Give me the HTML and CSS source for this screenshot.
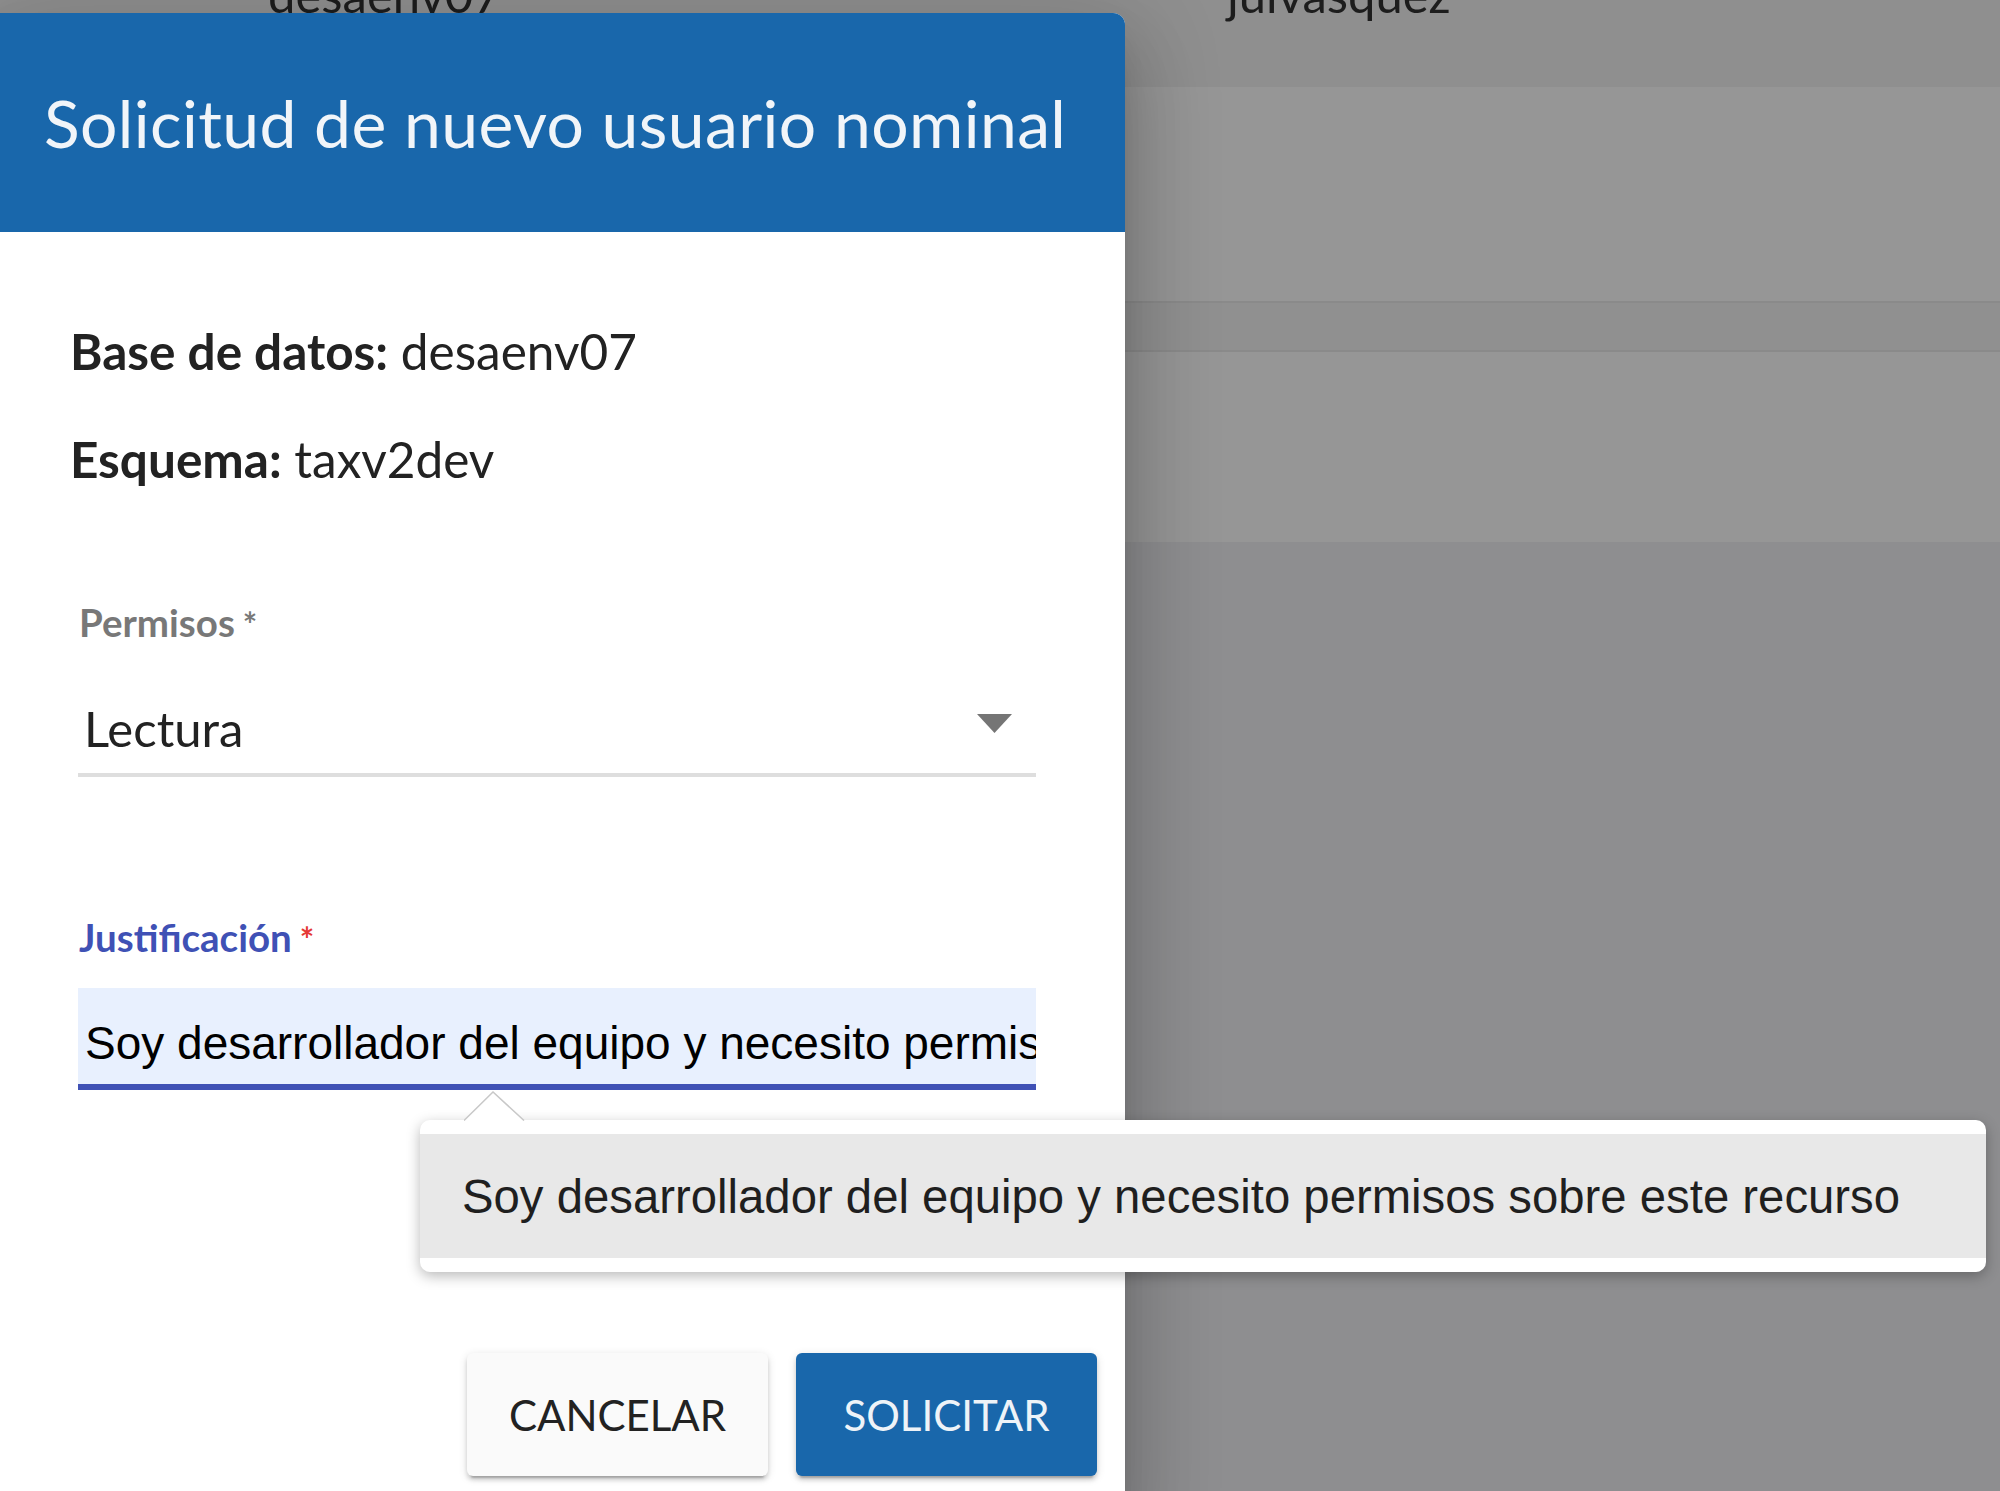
FILE: index.html
```html
<!DOCTYPE html>
<html lang="es">
<head>
<meta charset="utf-8">
<title>Solicitud de nuevo usuario nominal</title>
<link rel="stylesheet" href="styles.css">
</head>
<body>
<div class="page">
  <div class="bg">
    <div class="bg-row bg-row--head">
      <div class="bg-cells"><span class="cell cell--db">desaenv07</span><span class="cell cell--user">julvasquez</span></div>
    </div>
    <div class="bg-row bg-row--a"></div>
    <div class="bg-row bg-row--b"></div>
    <div class="bg-row bg-row--c"></div>
  </div>

  <div class="dialog">
    <div class="dialog-header"><h1 class="dialog-title">Solicitud de nuevo usuario nominal</h1></div>
    <div class="dialog-body">
      <p class="info"><b>Base de datos:</b> desaenv07</p>
      <p class="info info--second"><b>Esquema:</b> taxv2dev</p>

      <div class="field field--select">
        <label class="field-label">Permisos<span class="req">*</span></label>
        <div class="select">
          <span class="select-value">Lectura</span>
          <svg class="caret" width="35" height="19" viewBox="0 0 35 19"><path d="M0 0 H35 L17.5 19 Z" fill="#757575"/></svg>
        </div>
      </div>

      <div class="field field--input">
        <label class="field-label field-label--focused">Justificación<span class="req req--error">*</span></label>
        <div class="input">Soy desarrollador del equipo y necesito permisos sobre este recurso</div>
      </div>

      <div class="actions">
        <button class="btn btn--cancel">CANCELAR</button>
        <button class="btn btn--primary">SOLICITAR</button>
      </div>
    </div>
  </div>

  <div class="autofill">
    <svg class="autofill-arrow" width="62" height="30" viewBox="0 0 62 30"><path d="M0 29.5 L29 1 L60 29.5" fill="#fff" stroke="#c8c8c8" stroke-width="1.5"/></svg>
    <div class="autofill-item">Soy desarrollador del equipo y necesito permisos sobre este recurso</div>
  </div>
</div>
</body>
</html>
```

FILE: styles.css
```css
* { box-sizing: border-box; }

body {
  margin: 0;
  background: #8e8e90;
}

.page {
  position: relative;
  width: 2000px;
  height: 1491px;
  overflow: hidden;
  font-family: Lato, "Noto Sans", sans-serif;
  background: #8e8e90;
}

/* background page (behind the modal overlay) */
.bg-row { width: 100%; }
.bg-row--head {
  height: 87px;
  background: #8f8f8f;
  overflow: hidden;
}
.bg-cells {
  display: flex;
  padding-left: 268px;
  margin-top: -36px;
  font-size: 49px;
  line-height: 60px;
  color: #1d1d1d;
  white-space: nowrap;
}
.cell--db { width: 959px; }
.bg-row--a {
  height: 216px;
  background: #969696;
  border-bottom: 2px solid #8a8a8a;
}
.bg-row--b {
  height: 49px;
  background: #909090;
  border-bottom: 2px solid #8a8a8a;
}
.bg-row--c {
  height: 190px;
  background: #969696;
}

/* dialog */
.dialog {
  position: absolute;
  left: 0;
  top: 13px;
  width: 1125px;
  bottom: -30px;
  background: #fff;
  border-radius: 0 12px 0 0;
  box-shadow: 0 22px 30px -14px rgba(0,0,0,.2), 0 48px 76px 6px rgba(0,0,0,.14), 0 18px 92px 16px rgba(0,0,0,.12);
}
.dialog-header {
  height: 219px;
  background: #1967ab;
  border-radius: 0 12px 0 0;
  padding-left: 44px;
}
.dialog-title {
  margin: 0;
  font-weight: 400;
  font-size: 66px;
  letter-spacing: 0.4px;
  line-height: 219px;
  color: #f1f5f9;
  white-space: nowrap;
}
.dialog-body {
  padding: 89px 28px 0 70px;
}
.info {
  margin: 0;
  font-size: 49.5px;
  line-height: 60px;
  color: #222;
  white-space: nowrap;
}
.info b { font-weight: 700; }
.info--second { margin-top: 48px; }

.field {
  margin-left: 8px;
  width: 958px;
}
.field--select { margin-top: 113px; }
.field--input { margin-top: 140px; }
.field-label {
  display: block;
  height: 40px;
  padding-left: 1px;
  font-size: 38.5px;
  line-height: 40px;
  font-weight: 700;
  color: #787878;
  white-space: nowrap;
}
.field-label--focused { color: #3f51b5; }
.req { margin-left: 8px; font-size: 34px; }
.req--error { color: #e53935; }

.select {
  margin-top: 56px;
  height: 79px;
  padding: 0 24px 0 6px;
  border-bottom: 4px solid #dedede;
  display: flex;
  justify-content: space-between;
  align-items: flex-start;
  font-size: 49px;
  line-height: 60px;
  color: #222;
}
.caret { margin-top: 16px; }

.input {
  margin-top: 31px;
  height: 102px;
  padding: 14px 5px 0 7px;
  border-bottom: 6px solid #3f51b5;
  background: #e8f0fe;
  font-family: "Liberation Sans", Arial, sans-serif;
  font-size: 46px;
  line-height: 82px;
  color: #000;
  white-space: nowrap;
  overflow: hidden;
}

.actions {
  margin-top: 263px;
  display: flex;
  justify-content: flex-end;
  gap: 28px;
}
.btn {
  width: 301px;
  height: 123px;
  border: 0;
  border-radius: 6px;
  font-family: Lato, "Noto Sans", sans-serif;
  font-size: 42px;
  box-shadow: 0 6px 2px -4px rgba(0,0,0,.2), 0 4px 4px rgba(0,0,0,.14), 0 2px 10px rgba(0,0,0,.12);
}
.btn--cancel { background: #fafafa; color: #222; }
.btn--primary { background: #1967ab; color: #eef3f8; }

/* browser autofill suggestion */
.autofill {
  position: absolute;
  left: 420px;
  top: 1120px;
  width: 1566px;
  height: 152px;
  padding: 14px 0;
  background: #fff;
  border-radius: 10px;
  box-shadow: 0 4px 14px rgba(0,0,0,.28);
}
.autofill-arrow {
  position: absolute;
  left: 44px;
  top: -29px;
}
.autofill-item {
  height: 124px;
  padding: 2px 0 0 42px;
  background: #e8e8e8;
  font-family: "Liberation Sans", Arial, sans-serif;
  font-size: 47.3px;
  line-height: 122px;
  color: #1f1f1f;
  white-space: nowrap;
}
```
